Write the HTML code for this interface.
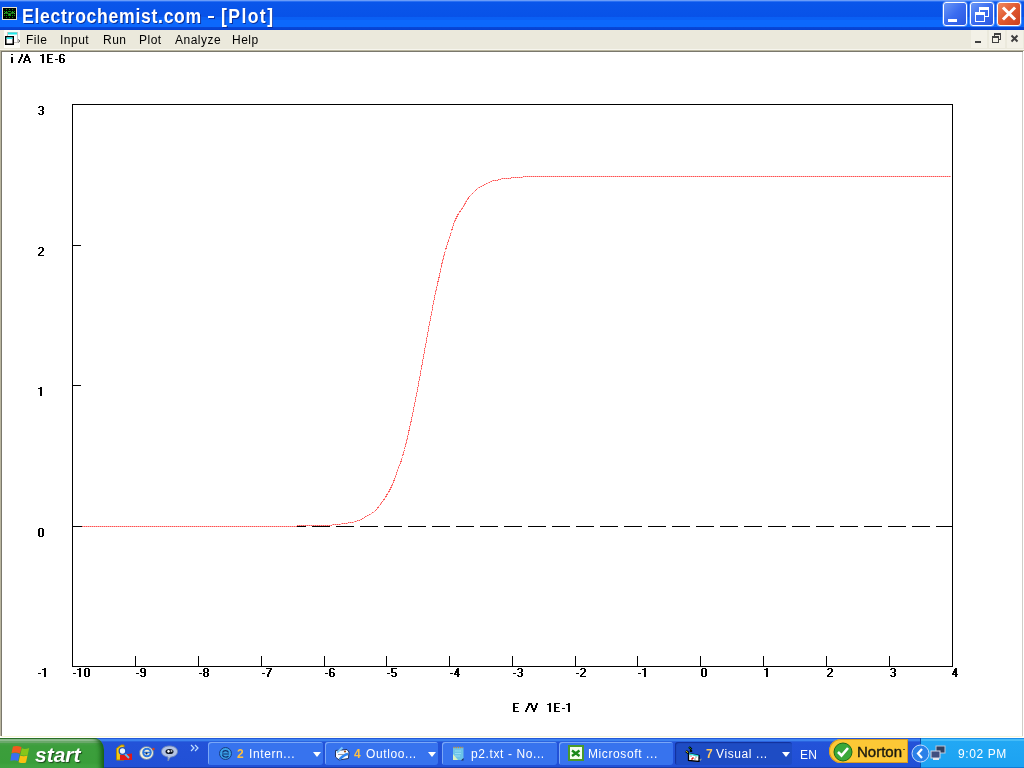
<!DOCTYPE html>
<html><head><meta charset="utf-8"><style>
html,body{margin:0;padding:0;width:1024px;height:768px;overflow:hidden;background:#fff;}
body{position:relative;font-family:"Liberation Sans",sans-serif;will-change:transform;}
.a{position:absolute;}
#title{left:0;top:0;width:1024px;height:30px;background:linear-gradient(#6a9cf8 0px,#6a9cf8 1px,#2a70f4 1px,#2a70f4 2px,#0a56ea 2px,#0852e8 17px,#0a60f4 17px,#0a60f4 20px,#0c68fc 20px,#0c68fc 27px,#0848d8 27px,#0640d0 30px);}
#title .t{top:3.5px;color:#fff;font-weight:bold;font-size:20px;line-height:24px;letter-spacing:0.8px;transform:scaleX(0.88);transform-origin:0 0;white-space:nowrap;text-shadow:1px 1px 0 #0a2f9c;}
.tb{top:2px;width:22px;height:22px;border:1px solid #fff;border-radius:3px;box-sizing:content-box;box-shadow:0 0 0 0.5px rgba(255,255,255,.5)}
#menu{left:0;top:30px;width:1024px;height:19px;background:#ebe9dc;}
#menu span{position:absolute;top:4px;font-size:12px;line-height:13px;color:#000;letter-spacing:0.5px;}
.mb{top:30px;width:16px;height:18px;background:#f3f1e7;}
#edge0{left:0;top:49px;width:1024px;height:1px;background:#f7f6ee;}
#edge1{left:0;top:50px;width:1024px;height:1px;background:#b9b59e;}
#edge2{left:1px;top:51px;width:1022px;height:1px;background:#7a786c;}
#edgeL1{left:0;top:50px;width:1px;height:686px;background:#b9b59e;}
#edgeL2{left:1px;top:51px;width:1px;height:685px;background:#7a786c;}
#edgeR{left:1022px;top:52px;width:1px;height:684px;background:#cfcdc8;}
#edgeB{left:1px;top:736px;width:1022px;height:1px;background:#f8f6d8;}
#task{left:0;top:738px;width:1024px;height:30px;background:linear-gradient(#2459d8 0px,#2459d8 1px,#3d82f0 1px,#3d82f0 3px,#2a63e0 3px,#2a63e0 4px,#2352d8 4px,#2150d6 29px,#1a3ca8 29px);}
#start{left:0;top:738px;width:104px;height:30px;border-radius:0 10px 0 0/0 12px 0 0;background:linear-gradient(#2a702a 0px,#2a702a 1px,#8fbc8f 1px,#8fbc8f 3px,#6aa86a 3px,#6aa86a 5px,#4aa04a 5px,#3c9e3c 8px,#3a9e3a 25px,#46aa46 30px);box-shadow:inset -6px 0 5px -3px #145a14;}
#start .s{left:35px;top:5px;color:#fff;font-weight:bold;font-style:italic;font-size:21px;line-height:24px;text-shadow:1px 1px 1px #1c4a1c;}
.btn{top:742px;height:23px;border-radius:3px;background:#3773ee;box-shadow:inset 1px 1px 0 #7aa7f7;}
.btn .i{position:absolute;left:10px;top:4px;width:15px;height:15px;}
.btn .n{position:absolute;left:29px;top:6px;font-size:12px;line-height:13px;color:#ffc040;font-weight:bold;}
.btn .l{position:absolute;top:6px;font-size:12px;line-height:13px;color:#fff;white-space:nowrap;letter-spacing:0.6px;}
.btn .d{position:absolute;top:10px;width:0;height:0;border-left:4px solid transparent;border-right:4px solid transparent;border-top:5px solid #fff;}
#tray{left:920px;top:738px;width:104px;height:30px;background:linear-gradient(#1a8ee6 0px,#1a8ee6 1px,#45bcf8 1px,#45bcf8 3px,#22a8f4 3px,#1ca2f2 29px,#0f7cd6 29px);box-shadow:inset 1px 0 0 #0b4ea8;}
svg{position:absolute;left:0;top:0;}
</style></head><body>
<div id="title" class="a">
<svg width="15" height="13" style="left:2px;top:7px" viewBox="0 0 15 13"><rect x="0.5" y="0.5" width="14" height="12" fill="#000" stroke="#e8e4cc"/><path d="M4.5 2v9M7.5 2v9M10.5 2v9M2 4.5h11M2 8.5h11" stroke="#0a9a0a" stroke-dasharray="1 1" shape-rendering="crispEdges"/><path d="M2 7l2.5-2 3 3 3-3 2.5 2" stroke="#40e040" fill="none"/></svg>
<div class="t a" style="left:22px">Electrochemist.com</div><div class="a" style="left:208px;top:16px;width:6px;height:2px;background:#fff;box-shadow:1px 1px 0 #0a2f9c"></div><div class="t a" style="left:221px;letter-spacing:1.6px">[Plot]</div>
<div class="a tb" style="left:943px;background:linear-gradient(135deg,#6a97f6,#3a6cf0 50%,#2a58e0)"><div class="a" style="left:4px;top:16px;width:9px;height:3px;background:#fff"></div></div>
<div class="a tb" style="left:970px;background:linear-gradient(135deg,#6a97f6,#3a6cf0 50%,#2a58e0)"><div class="a" style="left:8px;top:4px;width:8px;height:6px;border:1px solid #fff;border-top-width:3px"></div><div class="a" style="left:4px;top:9px;width:8px;height:6px;border:1px solid #fff;border-top-width:3px;background:#3a6cf0"></div></div>
<div class="a tb" style="left:997px;background:linear-gradient(135deg,#f08a60,#e0582e 50%,#c84020)"><svg width="22" height="22" style="left:0;top:0"><path d="M6 5.5l10 10M16 5.5l-10 10" stroke="#fff" stroke-width="3" stroke-linecap="square"/></svg></div>
</div>
<div id="menu" class="a">
<div class="a" style="left:4px;top:0px;width:16px;height:18px;background:#fcfcf6"></div>
<svg width="18" height="18" style="left:4px;top:0px" viewBox="0 0 18 18"><rect x="3.5" y="2.5" width="10" height="10" fill="#fff" stroke="#c8c4c0"/><path d="M4 3.5h9" stroke="#20e8e8" stroke-width="2"/><rect x="1.75" y="6.75" width="7.5" height="7.5" fill="#fff" stroke="#000" stroke-width="1.5"/><path d="M2.5 8.2h6" stroke="#20e8e8" stroke-width="1.5"/><path d="M14 9.5l2 1.5-2 1.5" stroke="#555" fill="none"/></svg>
<span style="left:26px">File</span><span style="left:60px">Input</span><span style="left:103px">Run</span><span style="left:139px">Plot</span><span style="left:175px">Analyze</span><span style="left:232px">Help</span>
</div>
<div class="a mb" style="left:971px"><div class="a" style="left:4px;top:11px;width:6px;height:2px;background:#404040"></div></div>
<div class="a mb" style="left:989px"><div class="a" style="left:5px;top:3px;width:5px;height:4px;border:1px solid #404040;border-top-width:2px"></div><div class="a" style="left:3px;top:6px;width:5px;height:4px;border:1px solid #404040;border-top-width:2px;background:#f3f1e7"></div></div>
<div class="a mb" style="left:1007px"><svg width="16" height="18" style="left:0;top:0"><path d="M4.5 5.5l6 6M10.5 5.5l-6 6" stroke="#404040" stroke-width="2"/></svg></div>
<div id="edge0" class="a"></div>
<div id="edge1" class="a"></div><div id="edge2" class="a"></div>
<div id="edgeL1" class="a"></div><div id="edgeL2" class="a"></div>
<div id="edgeR" class="a"></div><div id="edgeB" class="a"></div>
<svg width="1024" height="768" viewBox="0 0 1024 768" style="left:0;top:0">
<g shape-rendering="crispEdges" stroke="#000" stroke-width="1" fill="none">
<rect x="72.5" y="104.5" width="880" height="562"/>
<line x1="135.5" y1="656" x2="135.5" y2="666"/><line x1="198.5" y1="656" x2="198.5" y2="666"/><line x1="261.5" y1="656" x2="261.5" y2="666"/><line x1="324.5" y1="656" x2="324.5" y2="666"/><line x1="386.5" y1="656" x2="386.5" y2="666"/><line x1="449.5" y1="656" x2="449.5" y2="666"/><line x1="512.5" y1="656" x2="512.5" y2="666"/><line x1="575.5" y1="656" x2="575.5" y2="666"/><line x1="637.5" y1="656" x2="637.5" y2="666"/><line x1="700.5" y1="656" x2="700.5" y2="666"/><line x1="763.5" y1="656" x2="763.5" y2="666"/><line x1="826.5" y1="656" x2="826.5" y2="666"/><line x1="889.5" y1="656" x2="889.5" y2="666"/><line x1="72" y1="245.5" x2="81" y2="245.5"/><line x1="72" y1="385.5" x2="81" y2="385.5"/><line x1="72" y1="526.5" x2="81" y2="526.5"/>
<line x1="72" y1="526.5" x2="952" y2="526.5" stroke-dasharray="18 6"/>
<polyline points="81.5,526.5 296.5,526.5 297.5,525.5 331.5,525.5 332.5,524.5 340.5,524.5 341.5,523.5 347.5,523.5 348.5,522.5 353.5,522.5 354.5,521.5 356.5,521.5 357.5,520.5 359.5,520.5 360.5,519.5 361.5,519.5 362.5,518.5 363.5,518.5 364.5,517.5 365.5,516.5 366.5,516.5 367.5,515.5 368.5,515.5 369.5,514.5 370.5,514.5 371.5,513.5 372.5,512.5 373.5,512.5 374.5,511.5 375.5,510.5 376.5,509.5 377.5,508.5 378.5,506.5 379.5,505.5 380.5,504.5 381.5,502.5 382.5,501.5 383.5,500.5 384.5,498.5 385.5,497.5 386.5,495.5 387.5,493.5 388.5,492.5 389.5,490.5 390.5,488.5 391.5,486.5 392.5,484.5 393.5,481.5 394.5,479.5 395.5,476.5 396.5,473.5 397.5,470.5 398.5,467.5 399.5,464.5 400.5,463.5 401.5,459.5 402.5,456.5 403.5,452.5 404.5,449.5 405.5,445.5 406.5,441.5 407.5,437.5 408.5,432.5 409.5,428.5 410.5,423.5 411.5,419.5 412.5,414.5 413.5,409.5 414.5,404.5 415.5,399.5 416.5,394.5 417.5,389.5 418.5,384.5 419.5,378.5 420.5,373.5 421.5,367.5 422.5,362.5 423.5,356.5 424.5,351.5 425.5,345.5 426.5,340.5 427.5,334.5 428.5,329.5 429.5,323.5 430.5,318.5 431.5,313.5 432.5,308.5 433.5,302.5 434.5,297.5 435.5,292.5 436.5,288.5 437.5,283.5 438.5,279.5 439.5,275.5 440.5,270.5 441.5,265.5 442.5,261.5 443.5,257.5 444.5,253.5 445.5,250.5 446.5,246.5 447.5,243.5 448.5,240.5 449.5,237.5 450.5,234.5 451.5,231.5 452.5,227.5 453.5,224.5 454.5,221.5 455.5,219.5 456.5,217.5 457.5,215.5 458.5,213.5 459.5,212.5 460.5,210.5 461.5,209.5 462.5,207.5 463.5,206.5 464.5,204.5 465.5,202.5 466.5,200.5 467.5,199.5 468.5,197.5 469.5,196.5 470.5,195.5 471.5,194.5 472.5,193.5 473.5,192.5 474.5,191.5 475.5,190.5 476.5,189.5 477.5,188.5 478.5,187.5 479.5,187.5 480.5,186.5 481.5,186.5 482.5,185.5 483.5,185.5 484.5,184.5 485.5,184.5 486.5,183.5 487.5,183.5 488.5,182.5 489.5,182.5 490.5,181.5 491.5,181.5 492.5,180.5 497.5,180.5 498.5,179.5 500.5,179.5 501.5,178.5 510.5,178.5 511.5,177.5 522.5,177.5 523.5,176.5 950.5,176.5" stroke="#ffa4a4"/><polyline points="81.5,526.5 296.5,526.5 297.5,525.5 331.5,525.5 332.5,524.5 340.5,524.5 341.5,523.5 347.5,523.5 348.5,522.5 353.5,522.5 354.5,521.5 356.5,521.5 357.5,520.5 359.5,520.5 360.5,519.5 361.5,519.5 362.5,518.5 363.5,518.5 364.5,517.5 365.5,516.5 366.5,516.5 367.5,515.5 368.5,515.5 369.5,514.5 370.5,514.5 371.5,513.5 372.5,512.5 373.5,512.5 374.5,511.5 375.5,510.5 376.5,509.5 377.5,508.5 378.5,506.5 379.5,505.5 380.5,504.5 381.5,502.5 382.5,501.5 383.5,500.5 384.5,498.5 385.5,497.5 386.5,495.5 387.5,493.5 388.5,492.5 389.5,490.5 390.5,488.5 391.5,486.5 392.5,484.5 393.5,481.5 394.5,479.5 395.5,476.5 396.5,473.5 397.5,470.5 398.5,467.5 399.5,464.5 400.5,463.5 401.5,459.5 402.5,456.5 403.5,452.5 404.5,449.5 405.5,445.5 406.5,441.5 407.5,437.5 408.5,432.5 409.5,428.5 410.5,423.5 411.5,419.5 412.5,414.5 413.5,409.5 414.5,404.5 415.5,399.5 416.5,394.5 417.5,389.5 418.5,384.5 419.5,378.5 420.5,373.5 421.5,367.5 422.5,362.5 423.5,356.5 424.5,351.5 425.5,345.5 426.5,340.5 427.5,334.5 428.5,329.5 429.5,323.5 430.5,318.5 431.5,313.5 432.5,308.5 433.5,302.5 434.5,297.5 435.5,292.5 436.5,288.5 437.5,283.5 438.5,279.5 439.5,275.5 440.5,270.5 441.5,265.5 442.5,261.5 443.5,257.5 444.5,253.5 445.5,250.5 446.5,246.5 447.5,243.5 448.5,240.5 449.5,237.5 450.5,234.5 451.5,231.5 452.5,227.5 453.5,224.5 454.5,221.5 455.5,219.5 456.5,217.5 457.5,215.5 458.5,213.5 459.5,212.5 460.5,210.5 461.5,209.5 462.5,207.5 463.5,206.5 464.5,204.5 465.5,202.5 466.5,200.5 467.5,199.5 468.5,197.5 469.5,196.5 470.5,195.5 471.5,194.5 472.5,193.5 473.5,192.5 474.5,191.5 475.5,190.5 476.5,189.5 477.5,188.5 478.5,187.5 479.5,187.5 480.5,186.5 481.5,186.5 482.5,185.5 483.5,185.5 484.5,184.5 485.5,184.5 486.5,183.5 487.5,183.5 488.5,182.5 489.5,182.5 490.5,181.5 491.5,181.5 492.5,180.5 497.5,180.5 498.5,179.5 500.5,179.5 501.5,178.5 510.5,178.5 511.5,177.5 522.5,177.5 523.5,176.5 950.5,176.5" stroke="#ff5050" stroke-dasharray="1 1"/>
</g>
<path shape-rendering="crispEdges" fill="#000" d="M73 673h3v1h-3zM79 668h2v1h-2zM77 669h4v1h-4zM79 670h2v1h-2zM79 671h2v1h-2zM79 672h2v1h-2zM79 673h2v1h-2zM79 674h2v1h-2zM79 675h2v1h-2zM79 676h2v1h-2zM85 668h4v1h-4zM84 669h2v1h-2zM88 669h2v1h-2zM84 670h2v1h-2zM88 670h2v1h-2zM84 671h2v1h-2zM88 671h2v1h-2zM84 672h2v1h-2zM88 672h2v1h-2zM84 673h2v1h-2zM88 673h2v1h-2zM84 674h2v1h-2zM88 674h2v1h-2zM84 675h2v1h-2zM88 675h2v1h-2zM85 676h4v1h-4zM136 673h3v1h-3zM141 668h4v1h-4zM140 669h2v1h-2zM144 669h2v1h-2zM140 670h2v1h-2zM144 670h2v1h-2zM140 671h2v1h-2zM144 671h2v1h-2zM141 672h5v1h-5zM144 673h2v1h-2zM144 674h2v1h-2zM140 675h2v1h-2zM144 675h2v1h-2zM141 676h4v1h-4zM199 673h3v1h-3zM204 668h4v1h-4zM203 669h2v1h-2zM207 669h2v1h-2zM203 670h2v1h-2zM207 670h2v1h-2zM203 671h2v1h-2zM207 671h2v1h-2zM204 672h4v1h-4zM203 673h2v1h-2zM207 673h2v1h-2zM203 674h2v1h-2zM207 674h2v1h-2zM203 675h2v1h-2zM207 675h2v1h-2zM204 676h4v1h-4zM262 673h3v1h-3zM266 668h6v1h-6zM270 669h2v1h-2zM269 670h2v1h-2zM269 671h2v1h-2zM268 672h2v1h-2zM268 673h2v1h-2zM267 674h2v1h-2zM267 675h2v1h-2zM267 676h2v1h-2zM325 673h3v1h-3zM330 668h4v1h-4zM329 669h2v1h-2zM333 669h2v1h-2zM329 670h2v1h-2zM329 671h2v1h-2zM329 672h5v1h-5zM329 673h2v1h-2zM333 673h2v1h-2zM329 674h2v1h-2zM333 674h2v1h-2zM329 675h2v1h-2zM333 675h2v1h-2zM330 676h4v1h-4zM387 673h3v1h-3zM391 668h6v1h-6zM391 669h2v1h-2zM391 670h2v1h-2zM391 671h2v1h-2zM391 672h5v1h-5zM395 673h2v1h-2zM395 674h2v1h-2zM391 675h2v1h-2zM395 675h2v1h-2zM392 676h4v1h-4zM450 673h3v1h-3zM457 668h2v1h-2zM456 669h3v1h-3zM456 670h3v1h-3zM455 671h4v1h-4zM455 672h4v1h-4zM454 673h2v1h-2zM457 673h2v1h-2zM454 674h6v1h-6zM457 675h2v1h-2zM457 676h2v1h-2zM513 673h3v1h-3zM518 668h4v1h-4zM517 669h2v1h-2zM521 669h2v1h-2zM521 670h2v1h-2zM521 671h2v1h-2zM519 672h3v1h-3zM521 673h2v1h-2zM521 674h2v1h-2zM517 675h2v1h-2zM521 675h2v1h-2zM518 676h4v1h-4zM576 673h3v1h-3zM581 668h4v1h-4zM580 669h2v1h-2zM584 669h2v1h-2zM584 670h2v1h-2zM584 671h2v1h-2zM583 672h2v1h-2zM582 673h2v1h-2zM581 674h2v1h-2zM580 675h2v1h-2zM580 676h6v1h-6zM638 673h3v1h-3zM644 668h2v1h-2zM642 669h4v1h-4zM644 670h2v1h-2zM644 671h2v1h-2zM644 672h2v1h-2zM644 673h2v1h-2zM644 674h2v1h-2zM644 675h2v1h-2zM644 676h2v1h-2zM702 668h4v1h-4zM701 669h2v1h-2zM705 669h2v1h-2zM701 670h2v1h-2zM705 670h2v1h-2zM701 671h2v1h-2zM705 671h2v1h-2zM701 672h2v1h-2zM705 672h2v1h-2zM701 673h2v1h-2zM705 673h2v1h-2zM701 674h2v1h-2zM705 674h2v1h-2zM701 675h2v1h-2zM705 675h2v1h-2zM702 676h4v1h-4zM766 668h2v1h-2zM764 669h4v1h-4zM766 670h2v1h-2zM766 671h2v1h-2zM766 672h2v1h-2zM766 673h2v1h-2zM766 674h2v1h-2zM766 675h2v1h-2zM766 676h2v1h-2zM828 668h4v1h-4zM827 669h2v1h-2zM831 669h2v1h-2zM831 670h2v1h-2zM831 671h2v1h-2zM830 672h2v1h-2zM829 673h2v1h-2zM828 674h2v1h-2zM827 675h2v1h-2zM827 676h6v1h-6zM891 668h4v1h-4zM890 669h2v1h-2zM894 669h2v1h-2zM894 670h2v1h-2zM894 671h2v1h-2zM892 672h3v1h-3zM894 673h2v1h-2zM894 674h2v1h-2zM890 675h2v1h-2zM894 675h2v1h-2zM891 676h4v1h-4zM955 668h2v1h-2zM954 669h3v1h-3zM954 670h3v1h-3zM953 671h4v1h-4zM953 672h4v1h-4zM952 673h2v1h-2zM955 673h2v1h-2zM952 674h6v1h-6zM955 675h2v1h-2zM955 676h2v1h-2zM39 106h4v1h-4zM38 107h2v1h-2zM42 107h2v1h-2zM42 108h2v1h-2zM42 109h2v1h-2zM40 110h3v1h-3zM42 111h2v1h-2zM42 112h2v1h-2zM38 113h2v1h-2zM42 113h2v1h-2zM39 114h4v1h-4zM39 247h4v1h-4zM38 248h2v1h-2zM42 248h2v1h-2zM42 249h2v1h-2zM42 250h2v1h-2zM41 251h2v1h-2zM40 252h2v1h-2zM39 253h2v1h-2zM38 254h2v1h-2zM38 255h6v1h-6zM40 387h2v1h-2zM38 388h4v1h-4zM40 389h2v1h-2zM40 390h2v1h-2zM40 391h2v1h-2zM40 392h2v1h-2zM40 393h2v1h-2zM40 394h2v1h-2zM40 395h2v1h-2zM39 528h4v1h-4zM38 529h2v1h-2zM42 529h2v1h-2zM38 530h2v1h-2zM42 530h2v1h-2zM38 531h2v1h-2zM42 531h2v1h-2zM38 532h2v1h-2zM42 532h2v1h-2zM38 533h2v1h-2zM42 533h2v1h-2zM38 534h2v1h-2zM42 534h2v1h-2zM38 535h2v1h-2zM42 535h2v1h-2zM39 536h4v1h-4zM38 673h3v1h-3zM44 668h2v1h-2zM42 669h4v1h-4zM44 670h2v1h-2zM44 671h2v1h-2zM44 672h2v1h-2zM44 673h2v1h-2zM44 674h2v1h-2zM44 675h2v1h-2zM44 676h2v1h-2zM11 54h2v1h-2zM11 57h2v1h-2zM11 58h2v1h-2zM11 59h2v1h-2zM11 60h2v1h-2zM11 61h2v1h-2zM11 62h2v1h-2zM21 54h2v1h-2zM21 55h2v1h-2zM21 56h2v1h-2zM20 57h2v1h-2zM20 58h2v1h-2zM19 59h2v1h-2zM19 60h2v1h-2zM18 61h2v1h-2zM18 62h2v1h-2zM26 54h2v1h-2zM26 55h2v1h-2zM25 56h4v1h-4zM25 57h4v1h-4zM24 58h2v1h-2zM28 58h2v1h-2zM24 59h2v1h-2zM28 59h2v1h-2zM24 60h6v1h-6zM23 61h2v1h-2zM29 61h2v1h-2zM23 62h2v1h-2zM29 62h2v1h-2zM42 54h2v1h-2zM40 55h4v1h-4zM42 56h2v1h-2zM42 57h2v1h-2zM42 58h2v1h-2zM42 59h2v1h-2zM42 60h2v1h-2zM42 61h2v1h-2zM42 62h2v1h-2zM47 54h6v1h-6zM47 55h2v1h-2zM47 56h2v1h-2zM47 57h2v1h-2zM47 58h5v1h-5zM47 59h2v1h-2zM47 60h2v1h-2zM47 61h2v1h-2zM47 62h6v1h-6zM55 59h3v1h-3zM60 54h4v1h-4zM59 55h2v1h-2zM63 55h2v1h-2zM59 56h2v1h-2zM59 57h2v1h-2zM59 58h5v1h-5zM59 59h2v1h-2zM63 59h2v1h-2zM59 60h2v1h-2zM63 60h2v1h-2zM59 61h2v1h-2zM63 61h2v1h-2zM60 62h4v1h-4zM513 703h6v1h-6zM513 704h2v1h-2zM513 705h2v1h-2zM513 706h2v1h-2zM513 707h5v1h-5zM513 708h2v1h-2zM513 709h2v1h-2zM513 710h2v1h-2zM513 711h6v1h-6zM528 703h2v1h-2zM528 704h2v1h-2zM528 705h2v1h-2zM527 706h2v1h-2zM527 707h2v1h-2zM526 708h2v1h-2zM526 709h2v1h-2zM525 710h2v1h-2zM525 711h2v1h-2zM530 703h2v1h-2zM536 703h2v1h-2zM530 704h2v1h-2zM536 704h2v1h-2zM531 705h2v1h-2zM535 705h2v1h-2zM531 706h2v1h-2zM535 706h2v1h-2zM531 707h2v1h-2zM535 707h2v1h-2zM532 708h4v1h-4zM532 709h4v1h-4zM533 710h2v1h-2zM533 711h2v1h-2zM549 703h2v1h-2zM547 704h4v1h-4zM549 705h2v1h-2zM549 706h2v1h-2zM549 707h2v1h-2zM549 708h2v1h-2zM549 709h2v1h-2zM549 710h2v1h-2zM549 711h2v1h-2zM554 703h6v1h-6zM554 704h2v1h-2zM554 705h2v1h-2zM554 706h2v1h-2zM554 707h5v1h-5zM554 708h2v1h-2zM554 709h2v1h-2zM554 710h2v1h-2zM554 711h6v1h-6zM562 708h3v1h-3zM568 703h2v1h-2zM566 704h4v1h-4zM568 705h2v1h-2zM568 706h2v1h-2zM568 707h2v1h-2zM568 708h2v1h-2zM568 709h2v1h-2zM568 710h2v1h-2zM568 711h2v1h-2z"/>
</svg>
<div id="task" class="a"></div>
<div id="start" class="a">
<svg width="20" height="19" style="left:10px;top:7px" viewBox="0 0 20 19"><path d="M3 1.5Q7 0.3 11.5 2L10 8.5Q6 7 1.5 8Z" fill="#f25a1e"/><path d="M11.8 3.3Q15 4.6 19.2 3L17.6 10.2Q14 11.2 10.3 10Z" fill="#86c61a"/><path d="M1.5 8.6Q5 7.4 9.6 9L8.1 16Q5 14.6 0.4 15.8Z" fill="#3c6ef0"/><path d="M10.1 10.6Q13.6 11.8 17.5 10.6L16 17.6Q12.6 18.8 8.6 17.2Z" fill="#f8c010"/></svg>
<div class="a s">start</div>
</div>
<svg width="18" height="18" style="left:115px;top:744px" viewBox="0 0 18 18"><path d="M1.5 16V4.5L6 1H9V16Z" fill="#f2c814" stroke="#b08800"/><path d="M5 11L17 9.5V16H5Z" fill="#e01818"/><path d="M8.5 8.5L14 14" stroke="#60c0f0" stroke-width="1.8"/><circle cx="7.5" cy="7" r="3.3" fill="#e8f4ff" stroke="#2050c0" stroke-width="1.3"/></svg>
<svg width="18" height="18" style="left:138px;top:744px" viewBox="0 0 18 18"><ellipse cx="8.5" cy="9" rx="7" ry="6.5" fill="#f4f0d8" stroke="#6080b0"/><circle cx="9" cy="8.5" r="3.8" fill="none" stroke="#2a78e0" stroke-width="2"/><path d="M6 8.5h6" stroke="#2a78e0" stroke-width="1.5"/><circle cx="8.5" cy="9.5" r="1" fill="#102040"/><circle cx="15.5" cy="5" r="1.2" fill="#e04010"/></svg>
<svg width="18" height="18" style="left:161px;top:745px" viewBox="0 0 18 18"><path d="M8.5 1C13 1 16.5 3.2 16.5 6.5S13 12 9.5 12L7 16V12C3.5 11.5 .5 9.5 .5 6.5.5 3.2 4 1 8.5 1Z" fill="#b4c4e4" stroke="#7088b8"/><ellipse cx="8.5" cy="6.5" rx="4" ry="2.6" fill="#101828"/><ellipse cx="7.5" cy="6.3" rx="1.2" ry="1.4" fill="#fff"/><ellipse cx="10.5" cy="6" rx="1" ry="0.8" fill="#fff"/></svg>
<svg width="10" height="8" style="left:190px;top:744px" viewBox="0 0 10 8"><path d="M1 1l3 3-3 3M5 1l3 3-3 3" stroke="#bfe0ff" stroke-width="1.2" fill="none"/></svg>
<div class="a btn" style="left:208px;width:115px">
<svg class="i" viewBox="0 0 15 15"><circle cx="7.5" cy="7.5" r="6" fill="#3aa0e8" stroke="#1a3c80"/><path d="M4 8h7M4.5 6.5c1-2.5 5-2.5 6 0M4.5 9c1 2.5 4.5 2.5 6 1" stroke="#103070" stroke-width="1.2" fill="none"/></svg>
<div class="n">2</div><div class="l" style="left:41px">Intern...</div><div class="d" style="left:105px"></div></div>
<div class="a btn" style="left:325px;width:113px">
<svg class="i" viewBox="0 0 15 15"><path d="M0.5 4.5L12 3.5 14 6 13.5 12.5 4 14 0.5 11Z" fill="#f4f8ff" stroke="#203060"/><path d="M2 6.5L7.5 1.5" stroke="#7ac8ff" stroke-width="2"/><path d="M4.5 13.5Q9 8.5 13 8" stroke="#2a84f4" stroke-width="2.6" fill="none"/><path d="M3 8.5h6" stroke="#9098a8"/><circle cx="10" cy="5.5" r="1.1" fill="#a05010"/></svg>
<div class="n">4</div><div class="l" style="left:41px">Outloo...</div><div class="d" style="left:103px"></div></div>
<div class="a btn" style="left:442px;width:115px">
<svg class="i" viewBox="0 0 15 15"><path d="M1 1.5H11.5V12L9.5 14H1Z" fill="#6cc4e8"/><path d="M1 8L1 14H6Z" fill="#d8f0c0"/><path d="M9.5 14L11.5 12V14.5H9Z" fill="#203050"/><path d="M1.5 1.5h9.5" stroke="#c89038" stroke-width="1.6" stroke-dasharray="1.2 1"/><path d="M3 5h6M3 7.5h6M3 10h5" stroke="#a0e0f8" stroke-width="0.8"/></svg>
<div class="l" style="left:29px">p2.txt - No...</div></div>
<div class="a btn" style="left:559px;width:114px">
<svg class="i" viewBox="0 0 16 16" style="left:9px;top:3px;width:16px;height:16px"><rect x="1" y="1" width="14" height="14" fill="#f4fff0" stroke="#4a9a2a" stroke-width="2"/><path d="M4 5.5L11.5 11M11.5 5.5L4 11" stroke="#1a8a1a" stroke-width="2.4"/></svg>
<div class="l" style="left:29px">Microsoft ...</div></div>
<div class="a btn" style="left:675px;width:117px;background:#1e4cc4;box-shadow:inset 1px 1px 1px #12309a">
<svg class="i" viewBox="0 0 17 16" style="width:17px;height:16px"><path d="M4 1L6.5 3.5M6 4v2" stroke="#000" stroke-width="2.4"/><path d="M4 1.2L6 3.2" stroke="#20a020" stroke-width="1"/><path d="M1 5l2.5 2" stroke="#000" stroke-width="2.4"/><path d="M1.2 5.2l2 1.6" stroke="#f0f020" stroke-width="1"/><path d="M3.5 7.5L14 9.5V15.5L3.5 14.5Z" fill="#fff" stroke="#000" stroke-width="1.3"/><path d="M4 7.8L13.5 9.8" stroke="#30e8e8" stroke-width="1.3"/><path d="M5 10h2M10 11h2M9 13h2" stroke="#808080" stroke-width="0.8"/><path d="M8.5 11.5l-2 2" stroke="#e01010" stroke-width="1.6"/><path d="M14.5 13.5l2.5-1-1.5 2.5z" fill="#a0a090"/></svg>
<div class="n" style="color:#ffc860;left:31px">7</div><div class="l" style="left:41px">Visual ...</div><div class="d" style="left:107px"></div></div>
<div class="a" style="left:800px;top:749px;letter-spacing:0.3px;font-size:12px;line-height:13px;color:#fff">EN</div>
<div class="a" style="left:829px;top:739px;width:79px;height:24px;border-radius:12px 0 0 12px;background:#fcc836;box-shadow:inset 0 0 0 1px #d89a20"></div>
<svg width="20" height="20" style="left:833px;top:742px" viewBox="0 0 20 20"><circle cx="10" cy="10" r="9" fill="#3aa83a" stroke="#1a6a1a"/><path d="M5 10l3.5 3.5L15 6" stroke="#fff" stroke-width="2.6" fill="none"/></svg>
<div class="a" style="left:857px;top:743px;font-size:15px;line-height:17px;color:#1a1a10;-webkit-text-stroke:0.4px #1a1a10">Norton</div><div class="a" style="left:903px;top:749px;width:2px;height:1px;background:#6a5020"></div>
<div id="tray" class="a"></div>
<svg width="19" height="19" style="left:911px;top:744px" viewBox="0 0 19 19"><circle cx="9.5" cy="9.5" r="8.5" fill="#2a80e8" stroke="#c8e0ff"/><path d="M11 5l-4 4.5 4 4.5" stroke="#fff" stroke-width="2.2" fill="none"/></svg>
<svg width="17" height="17" style="left:930px;top:745px" viewBox="0 0 17 17"><rect x="6" y="1" width="9" height="7" fill="#304060" stroke="#c0c8d8"/><rect x="1" y="6" width="9" height="7" fill="#405080" stroke="#d0d8e8"/><path d="M3 14h6" stroke="#e0e8f0" stroke-width="2"/></svg>
<div class="a" style="left:958px;top:748px;font-size:12px;line-height:13px;color:#fff;letter-spacing:0.6px">9:02 PM</div>
</body></html>
